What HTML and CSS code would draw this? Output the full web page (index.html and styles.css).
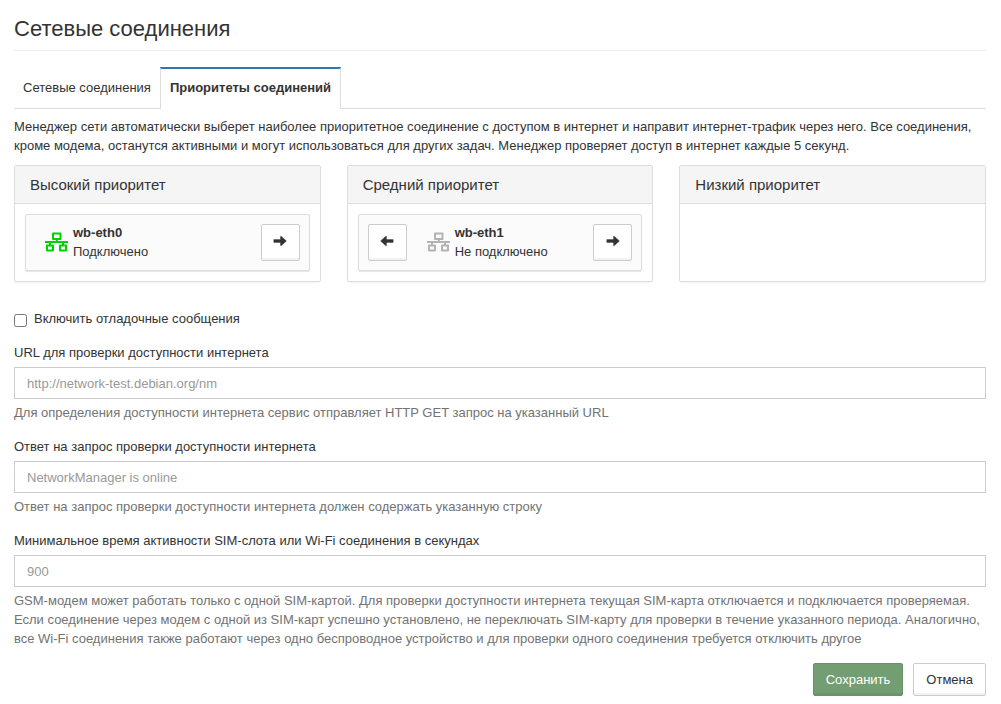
FILE: index.html
```html
<!DOCTYPE html>
<html lang="ru">
<head>
<meta charset="utf-8">
<meta name="viewport" content="width=device-width, initial-scale=1">
<title>Сетевые соединения</title>
<link rel="stylesheet" href="styles.css">
</head>
<body>
<svg class="sprite" aria-hidden="true">
  <symbol id="lan" viewBox="0 0 23 20">
    <path fill="none" stroke="currentColor" stroke-width="2" stroke-linejoin="round" d="M8 1.500h7.500v5.500h-7.500zM2 13.500h6v5h-6zM15 13.500h6v5h-6z"/>
    <path fill="none" stroke="currentColor" stroke-width="2" d="M11.800 7v3M5 10v4M18 10v4M0 10h23"/>
  </symbol>
  <symbol id="arrow" viewBox="0 0 14 12">
    <path fill="currentColor" stroke="currentColor" stroke-width="0.400" stroke-linejoin="round" d="M0.800 4.600h6.700v-3.200h1l4.900 4.600-4.900 4.600h-1v-3.200h-6.700z"/>
  </symbol>
</svg>
<main class="page">
  <h1 class="page-title">Сетевые соединения</h1>
  <nav class="tabs">
    <a class="tab" href="#connections">Сетевые соединения</a>
    <a class="tab tab-active" href="#priorities" aria-current="page">Приоритеты соединений</a>
  </nav>
  <p class="intro">Менеджер сети автоматически выберет наиболее приоритетное соединение с доступом в интернет и направит интернет-трафик через него. Все соединения, кроме модема, останутся активными и могут использоваться для других задач. Менеджер проверяет доступ в интернет каждые 5 секунд.</p>

  <div class="priorities">
    <section class="panel">
      <h2 class="panel-title">Высокий приоритет</h2>
      <div class="panel-body">
        <div class="connection">
          <svg class="lan-icon lan-online" aria-hidden="true"><use href="#lan"/></svg>
          <div class="connection-text"><strong>wb-eth0</strong><span>Подключено</span></div>
          <button class="button move" type="button" aria-label="Понизить приоритет"><svg class="arrow"><use href="#arrow"/></svg></button>
        </div>
      </div>
    </section>
    <section class="panel">
      <h2 class="panel-title">Средний приоритет</h2>
      <div class="panel-body">
        <div class="connection">
          <button class="button move" type="button" aria-label="Повысить приоритет"><svg class="arrow arrow-left"><use href="#arrow"/></svg></button>
          <svg class="lan-icon lan-offset" aria-hidden="true"><use href="#lan"/></svg>
          <div class="connection-text"><strong>wb-eth1</strong><span>Не подключено</span></div>
          <button class="button move" type="button" aria-label="Понизить приоритет"><svg class="arrow"><use href="#arrow"/></svg></button>
        </div>
      </div>
    </section>
    <section class="panel">
      <h2 class="panel-title">Низкий приоритет</h2>
      <div class="panel-body"></div>
    </section>
  </div>

  <form class="settings">
    <div class="check-row">
      <input class="check" type="checkbox" id="debug">
      <label for="debug">Включить отладочные сообщения</label>
    </div>
    <div class="field">
      <label class="field-label" for="url">URL для проверки доступности интернета</label>
      <input class="field-input" type="text" id="url" placeholder="http://network-test.debian.org/nm">
      <p class="help">Для определения доступности интернета сервис отправляет HTTP GET запрос на указанный URL</p>
    </div>
    <div class="field">
      <label class="field-label" for="answer">Ответ на запрос проверки доступности интернета</label>
      <input class="field-input" type="text" id="answer" placeholder="NetworkManager is online">
      <p class="help">Ответ на запрос проверки доступности интернета должен содержать указанную строку</p>
    </div>
    <div class="field">
      <label class="field-label" for="period">Минимальное время активности SIM-слота или Wi-Fi соединения в секундах</label>
      <input class="field-input" type="text" id="period" placeholder="900">
      <p class="help">GSM-модем может работать только с одной SIM-картой. Для проверки доступности интернета текущая SIM-карта отключается и подключается проверяемая. Если соединение через модем с одной из SIM-карт успешно установлено, не переключать SIM-карту для проверки в течение указанного периода. Аналогично, все Wi-Fi соединения также работают через одно беспроводное устройство и для проверки одного соединения требуется отключить другое</p>
    </div>
    <div class="actions">
      <button class="button save" type="submit">Сохранить</button>
      <button class="button" type="button">Отмена</button>
    </div>
  </form>
</main>
</body>
</html>
```

FILE: styles.css
```css
* {
  box-sizing: border-box;
}

body {
  margin: 0;
  background: #fff;
  color: #333;
  font: 13px/19px "Liberation Sans", Arial, sans-serif;
}

h1, h2, p {
  margin: 0;
}

.sprite {
  display: none;
}

.page {
  padding: 14px 15px 8px 14px;
}

.page-title {
  padding-bottom: 6px;
  border-bottom: 1px solid #eee;
  font-size: 22px;
  font-weight: 400;
  line-height: 30px;
}

.tabs {
  display: flex;
  margin-top: 16px;
  border-bottom: 1px solid #ddd;
}

.tab {
  padding: 9px 9px 11px;
  border: solid transparent;
  border-width: 2px 0 0;
  color: #333;
  text-decoration: none;
}

.tab-active {
  margin-bottom: -1px;
  border-color: #3276b1 #ddd transparent;
  border-width: 2px 1px 0;
  background: #fff;
  font-weight: 700;
}

.intro {
  margin-top: 8px;
}

.priorities {
  display: grid;
  grid-template-columns: repeat(3, 1fr);
  gap: 26px;
  margin-top: 10px;
}

.panel {
  min-height: 117px;
  border: 1px solid #ddd;
  border-radius: 2px;
  box-shadow: 0 1px 1px rgba(0, 0, 0, 0.05);
}

.panel-title {
  padding: 9px 15px;
  border-bottom: 1px solid #ddd;
  background: #f5f5f5;
  font-size: 15px;
  font-weight: 400;
  line-height: 19px;
}

.panel-body {
  padding: 10px;
}

.connection {
  display: flex;
  align-items: center;
  padding: 8px 9px 9px;
  border: 1px solid #ddd;
  border-radius: 2px;
  background: #fbfbfb;
  box-shadow: 0 1px 1px rgba(0, 0, 0, 0.1);
}

.lan-icon {
  flex: none;
  width: 23px;
  height: 20px;
  margin-left: 10px;
  color: #b3b3b3;
}

.lan-online {
  color: #00d200;
}

.lan-offset {
  margin-left: 20px;
}

.connection-text {
  display: flex;
  flex: 1;
  flex-direction: column;
  padding-left: 5px;
}

.button {
  padding: 6px 12px;
  border: 1px solid #ccc;
  border-radius: 2px;
  background: #fff;
  box-shadow: inset 0 -2px 0 rgba(0, 0, 0, 0.05);
  color: #333;
  font: inherit;
  cursor: pointer;
}

.move {
  display: flex;
  align-items: center;
  align-self: flex-end;
  justify-content: center;
  width: 39px;
  height: 37px;
  padding: 0 0 3px;
}

.arrow {
  width: 14px;
  height: 12px;
}

.arrow-left {
  transform: scaleX(-1);
}

.settings {
  margin-top: 27px;
}

.check-row {
  display: flex;
  gap: 7px;
  margin-bottom: 15px;
}

.check {
  width: 13px;
  height: 13px;
  margin: 5px 0 0;
}

.field {
  margin-bottom: 15px;
}

.field-label {
  display: block;
  margin-bottom: 5px;
}

.field-input {
  display: block;
  width: 100%;
  height: 32px;
  padding: 6px 12px;
  border: 1px solid #ccc;
  border-radius: 0;
  background: #fff;
  color: #333;
  font: inherit;
}

.field-input::placeholder {
  color: #999;
}

.help {
  margin-top: 4px;
  color: #737373;
}

.actions {
  display: flex;
  justify-content: flex-end;
  gap: 10px;
}

.save {
  border-color: #659265;
  background: #739e73;
  color: #fff;
}
```
